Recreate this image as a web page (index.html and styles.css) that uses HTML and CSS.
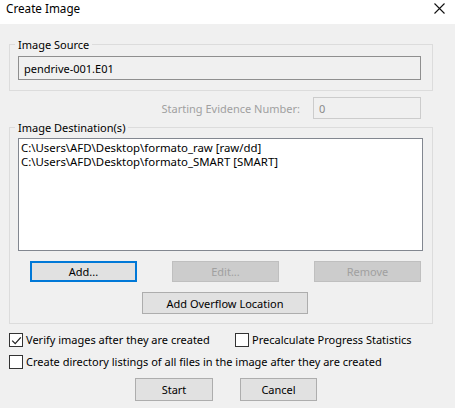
FILE: index.html
```html
<!DOCTYPE html>
<html>
<head>
<meta charset="utf-8">
<link rel="stylesheet" href="styles.css">
</head>
<body>
<div class="window">
  <div class="titlebar">
    <span class="title">Create Image</span>
    <svg class="close" width="11" height="11" viewBox="0 0 11 11"><path d="M0.5 0.5 L10.5 10.5 M10.5 0.5 L0.5 10.5" stroke="#111" stroke-width="1.1" fill="none"/></svg>
  </div>
  <div class="content">
    <fieldset class="group group-source">
      <legend class="legend">Image Source</legend>
      <div class="textbox readonly">pendrive-001.E01</div>
    </fieldset>
    <div class="evidence-row">
      <span class="label-disabled">Starting Evidence Number:</span>
      <div class="textbox disabled">0</div>
    </div>
    <fieldset class="group group-dest">
      <legend class="legend">Image Destination(s)</legend>
      <div class="listbox">
        <div class="list-item">C:\Users\AFD\Desktop\formato_raw [raw/dd]</div>
        <div class="list-item">C:\Users\AFD\Desktop\formato_SMART [SMART]</div>
      </div>
      <div class="btn-row">
        <button class="btn btn-default">Add...</button>
        <button class="btn btn-disabled">Edit...</button>
        <button class="btn btn-disabled">Remove</button>
      </div>
      <div class="overflow-row">
        <button class="btn btn-overflow">Add Overflow Location</button>
      </div>
    </fieldset>
    <div class="check-row">
      <label class="check check-first">
        <span class="box"><svg width="11" height="11" viewBox="0 0 11 11"><path d="M1.2 5.6 L4.2 8.6 L9.8 2.4" stroke="#222" stroke-width="1.3" fill="none"/></svg></span>
        <span class="check-text">Verify images after they are created</span>
      </label>
      <label class="check">
        <span class="box"></span>
        <span class="check-text">Precalculate Progress Statistics</span>
      </label>
    </div>
    <div class="check-row check-row-2">
      <label class="check">
        <span class="box"></span>
        <span class="check-text">Create directory listings of all files in the image after they are created</span>
      </label>
    </div>
    <div class="action-row">
      <button class="btn btn-start">Start</button>
      <button class="btn btn-cancel">Cancel</button>
    </div>
  </div>
</div>
</body>
</html>
```
FILE: styles.css
```css
* { box-sizing: border-box; }
html, body {
  margin: 0;
  padding: 0;
  background: #f0f0f0;
}
body {
  width: 455px;
  height: 408px;
  overflow: hidden;
  font-family: "Noto Sans", "Open Sans", sans-serif;
  font-size: 11px;
  color: #000;
}
.window {
  width: 455px;
  height: 408px;
  background: #f0f0f0;
}
.titlebar {
  height: 24px;
  background: #fff;
  display: flex;
  justify-content: space-between;
  align-items: flex-start;
  padding: 0 10px 0 6px;
}
.title {
  font-size: 11.7px;
  line-height: 17px;
  color: #000;
}
.close {
  margin-top: 3px;
  display: block;
}
.content {
  padding: 13px 22px 0 9px;
}
.group {
  margin: 0;
  border: 1px solid #dcdcdc;
  padding: 0 11px 10px 8px;
  min-inline-size: 0;
}
.legend {
  padding: 0 3px;
  margin-left: -3px;
  line-height: 15px;
  font-size: 11px;
}
.textbox {
  display: flex;
  align-items: center;
  padding-left: 5px;
}
.readonly {
  margin-top: 4px;
  height: 24px;
  border: 1px solid #8f8f8f;
  background: #f0f0f0;
}
.evidence-row {
  margin-top: 6px;
  height: 22px;
  display: flex;
  justify-content: flex-end;
  align-items: center;
  gap: 13px;
  padding-right: 12px;
}
.label-disabled {
  color: #a0a0a0;
}
.disabled {
  width: 108px;
  height: 22px;
  border: 1px solid #cccccc;
  color: #8a8a8a;
  background: #f0f0f0;
}
.group-dest {
  margin-top: 1px;
  padding-bottom: 9px;
}
.listbox {
  margin-top: 3px;
  margin-right: -2px;
  height: 113px;
  border: 1px solid #828790;
  background: #fff;
  padding: 2px 2px;
  font-size: 11.4px;
}
.list-item {
  line-height: 14px;
  white-space: nowrap;
}
.btn {
  font-family: inherit;
  font-size: 11px;
  margin: 0;
  padding: 0;
  border: 1px solid #adadad;
  background: #e1e1e1;
  color: #000;
  display: flex;
  align-items: center;
  justify-content: center;
}
.btn-row {
  margin-top: 10px;
  display: flex;
  gap: 35px;
  padding-left: 12px;
}
.btn-row .btn {
  width: 107px;
  height: 21px;
}
.btn-default {
  border: 2px solid #0078d7;
}
.btn-disabled {
  background: #cccccc;
  border-color: #bfbfbf;
  color: #a0a0a0;
}
.overflow-row {
  margin-top: 10px;
  padding-left: 124px;
}
.btn-overflow {
  width: 166px;
  height: 22px;
}
.check-row {
  margin-top: 9px;
  height: 14px;
  display: flex;
  align-items: center;
}
.check-row-2 {
  margin-top: 8px;
}
.check {
  display: flex;
  align-items: center;
}
.check-first {
  width: 226px;
}
.box {
  width: 14px;
  height: 14px;
  border: 1px solid #333;
  background: #fff;
  display: flex;
  align-items: center;
  justify-content: center;
  flex: none;
}
.box svg { display: block; }
.check-text {
  margin-left: 3px;
  line-height: 14px;
  white-space: nowrap;
}
.action-row {
  margin-top: 9px;
  display: flex;
  gap: 27px;
  padding-left: 126px;
}
.btn-start {
  width: 78px;
  height: 23px;
}
.btn-cancel {
  width: 77px;
  height: 23px;
}
```
